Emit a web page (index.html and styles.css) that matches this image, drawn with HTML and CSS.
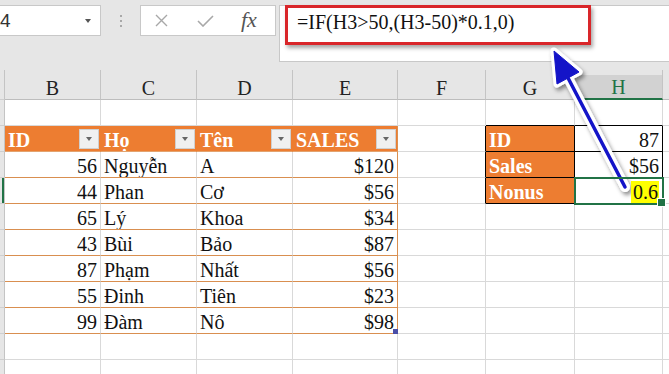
FILE: index.html
```html
<!DOCTYPE html>
<html lang="en">
<head>
  <meta charset="UTF-8">
  <meta name="viewport" content="width=device-width, initial-scale=1.0">
  <title>Excel IF</title>
  <link rel="stylesheet" href="styles.css">
</head>
<body>
  <div class="toolbar">
    <div class="namebox">
      <span>4</span>
      <svg class="caret" width="6" height="4" viewBox="0 0 6 4"><path d="M0 0h6L3 4z" fill="#555"/></svg>
    </div>
    <div class="grip"><i></i><i></i><i></i></div>
    <div class="fxbox">
      <svg class="ico-x" width="13" height="13" viewBox="0 0 13 13"><path d="M1 1l11 11M12 1L1 12" stroke="#a8a8a8" stroke-width="1.4" fill="none"/></svg>
      <svg class="ico-ok" width="17" height="12" viewBox="0 0 17 12"><path d="M1 6l5 5L16 1" stroke="#a8a8a8" stroke-width="1.6" fill="none"/></svg>
      <span class="fx">fx</span>
    </div>
    <div class="formula">
      <div class="formula-text">=IF(H3&gt;50,(H3-50)*0.1,0)</div>
    </div>
  </div>

  <div class="sheet">
    <!-- column letters -->
    <div class="rh corner"></div>
    <div class="ch">B</div><div class="ch">C</div><div class="ch">D</div><div class="ch">E</div>
    <div class="ch">F</div><div class="ch">G</div><div class="ch sel">H</div><div class="ch"></div>

    <!-- row 2 -->
    <div class="rh"></div>
    <div></div><div></div><div></div><div></div><div></div>
    <div class="box-top"></div><div class="box-top"></div><div></div>

    <!-- row 3 -->
    <div class="rh"></div>
    <div class="th">ID<span class="dd"></span></div>
    <div class="th">Họ<span class="dd"></span></div>
    <div class="th">Tên<span class="dd"></span></div>
    <div class="th end">SALES<span class="dd"></span></div>
    <div class="box-left"></div>
    <div class="key">ID</div><div class="val">87</div><div></div>

    <!-- row 4 -->
    <div class="rh"></div>
    <div class="tb num">56</div><div class="tb">Nguyễn</div><div class="tb">A</div><div class="tb num end">$120</div>
    <div class="box-left"></div>
    <div class="key">Sales</div><div class="val">$56</div><div></div>

    <!-- row 5 -->
    <div class="rh sel"></div>
    <div class="tb num">44</div><div class="tb">Phan</div><div class="tb">Cơ</div><div class="tb num end">$56</div>
    <div class="box-left"></div>
    <div class="key">Nonus</div><div class="val active"><span class="hl">0.6</span></div><div></div>

    <!-- row 6 -->
    <div class="rh"></div>
    <div class="tb num">65</div><div class="tb">Lý</div><div class="tb">Khoa</div><div class="tb num end">$34</div>
    <div></div><div></div><div></div><div></div>

    <!-- row 7 -->
    <div class="rh"></div>
    <div class="tb num">43</div><div class="tb">Bùi</div><div class="tb">Bảo</div><div class="tb num end">$87</div>
    <div></div><div></div><div></div><div></div>

    <!-- row 8 -->
    <div class="rh"></div>
    <div class="tb num">87</div><div class="tb">Phạm</div><div class="tb">Nhất</div><div class="tb num end">$56</div>
    <div></div><div></div><div></div><div></div>

    <!-- row 9 -->
    <div class="rh"></div>
    <div class="tb num">55</div><div class="tb">Đinh</div><div class="tb">Tiên</div><div class="tb num end">$23</div>
    <div></div><div></div><div></div><div></div>

    <!-- row 10 -->
    <div class="rh"></div>
    <div class="tb num">99</div><div class="tb">Đàm</div><div class="tb">Nô</div><div class="tb num end last">$98</div>
    <div></div><div></div><div></div><div></div>

    <!-- row 11 -->
    <div class="rh"></div>
    <div></div><div></div><div></div><div></div><div></div><div></div><div></div><div></div>

    <!-- row 12 -->
    <div class="rh"></div>
    <div></div><div></div><div></div><div></div><div></div><div></div><div></div><div></div>
  </div>

  <!-- annotation arrow from the cell up to the formula -->
  <svg class="arrow" width="669" height="374" viewBox="0 0 669 374">
    <defs>
      <filter id="shadow" x="-50%" y="-50%" width="200%" height="200%">
        <feDropShadow dx="2" dy="3" stdDeviation="2" flood-color="#000" flood-opacity="0.45"/>
      </filter>
    </defs>
    <g filter="url(#shadow)">
      <path d="M567 76L625 187" stroke="#fff" stroke-width="10" stroke-linecap="round" fill="none"/>
      <path d="M554 51L579 72L557 84Z" fill="#fff" stroke="#fff" stroke-width="7" stroke-linejoin="round"/>
    </g>
    <path d="M567 76L625 187" stroke="#1414c8" stroke-width="3.5" stroke-linecap="round" fill="none"/>
    <path d="M554 51L579 72L557 84Z" fill="#1414c8" stroke="#1414c8" stroke-width="1" stroke-linejoin="round"/>
  </svg>
</body>
</html>
```

FILE: styles.css
```css
* {
  box-sizing: border-box;
}
body {
  margin: 0;
  width: 669px;
  height: 374px;
  overflow: hidden;
  position: relative;
  background: #fff;
  font-family: "Liberation Serif", serif;
  font-size: 20px;
  color: #111;
}

/* formula bar area */
.toolbar {
  height: 70px;
  background: #e6e6e6;
  display: flex;
  align-items: flex-start;
  padding-top: 5px;
}
.namebox {
  width: 101px;
  height: 31px;
  background: #fff;
  border: 1px solid #c8c8c8;
  border-left: none;
  display: flex;
  align-items: center;
  padding-right: 9px;
  font-family: "Liberation Sans", sans-serif;
  font-size: 19px;
  color: #333;
}
.namebox .caret {
  margin-left: auto;
}
.grip {
  width: 39px;
  height: 31px;
  display: flex;
  flex-direction: column;
  align-items: center;
  justify-content: center;
  gap: 3px;
}
.grip i {
  width: 2px;
  height: 2px;
  background: #a8a8a8;
}
.fxbox {
  width: 136px;
  height: 31px;
  background: #fff;
  border: 1px solid #c8c8c8;
  display: flex;
  align-items: center;
}
.ico-x {
  margin-left: 14px;
}
.ico-ok {
  margin-left: 29px;
}
.fx {
  margin-left: 27px;
  font-style: italic;
  font-size: 22px;
  color: #555;
  padding-bottom: 2px;
}
.formula {
  flex: 1;
  height: 57px;
  margin-left: 3px;
  margin-right: -2px;
  background: #fff;
  border: 1px solid #c8c8c8;
}
.formula-text {
  margin: -1px 0 0 5px;
  width: 306px;
  height: 40px;
  border: 3px solid #d9262a;
  box-shadow: 2px 3px 4px rgba(0, 0, 0, 0.35);
  padding: 3px 0 0 9px;
  line-height: 22px;
  color: #111;
}

/* worksheet grid */
.sheet {
  display: grid;
  grid-template-columns: 5px 96px 96px 96px 105px 88px 89px 88px 6px;
  grid-template-rows: 30px;
  grid-auto-rows: 26px;
}
.sheet > div {
  border-right: 1px solid #d9d9d9;
  border-bottom: 1px solid #d9d9d9;
  display: flex;
  align-items: center;
  padding: 3px 3px 0;
  white-space: nowrap;
  overflow: hidden;
}
.sheet > .rh {
  background: #e6e6e6;
  border-right-color: #c4c4c4;
  border-bottom-color: #cfcfcf;
  padding: 0;
}
.sheet > .rh.sel {
  box-shadow: inset -2px 0 #217346;
}
.sheet > .ch {
  background: #e6e6e6;
  border-right-color: #c4c4c4;
  border-bottom-color: #bdbdbd;
  justify-content: center;
  padding-top: 7px;
  color: #222;
}
.sheet > .ch.sel {
  background: linear-gradient(#e6e6e6 0 5px, #d2d2d2 5px);
  color: #217346;
  border-bottom: 2px solid #217346;
}
.num {
  justify-content: flex-end;
}

/* orange table */
.sheet > .th {
  background: #ed7d31;
  color: #fff;
  font-weight: bold;
  border-right-color: #ed7d31;
  border-bottom-color: #e3a36f;
  padding-right: 1px;
}
.dd {
  margin-left: auto;
  margin-top: -3px;
  width: 20px;
  height: 20px;
  background: #f0f0f0;
  border: 1px solid #cfcfcf;
  display: flex;
  align-items: center;
  justify-content: center;
}
.dd::before {
  content: '';
  border-left: 3px solid transparent;
  border-right: 3px solid transparent;
  border-top: 4px solid #666;
}
.sheet > .tb {
  border-bottom-color: #d98f50;
}
.sheet > .end {
  border-right-color: #d98f50;
}
.sheet > .last {
  position: relative;
  overflow: visible;
}
.last::after {
  content: '';
  position: absolute;
  right: -1px;
  bottom: -1px;
  width: 5px;
  height: 5px;
  background: #4a4fa8;
}

/* small lookup box */
.sheet > .box-top {
  border-bottom-color: #000;
}
.sheet > .box-left {
  border-right-color: #000;
}
.sheet > .key {
  background: #ed7d31;
  color: #fff;
  font-weight: bold;
  border-right-color: #000;
  border-bottom-color: #000;
}
.sheet > .val {
  justify-content: flex-end;
  border-right-color: #000;
  border-bottom-color: #000;
}
.sheet > .val.active {
  position: relative;
  overflow: visible;
  z-index: 1;
  outline: 2px solid #217346;
  outline-offset: -1px;
  border-color: #217346;
}
.val.active::after {
  content: '';
  position: absolute;
  right: -4px;
  bottom: -4px;
  width: 7px;
  height: 7px;
  background: #217346;
  border: 1px solid #fff;
}
.hl {
  background: #ffff00;
  padding: 0 1px 0 2px;
}

.arrow {
  position: absolute;
  left: 0;
  top: 0;
  pointer-events: none;
}
```
